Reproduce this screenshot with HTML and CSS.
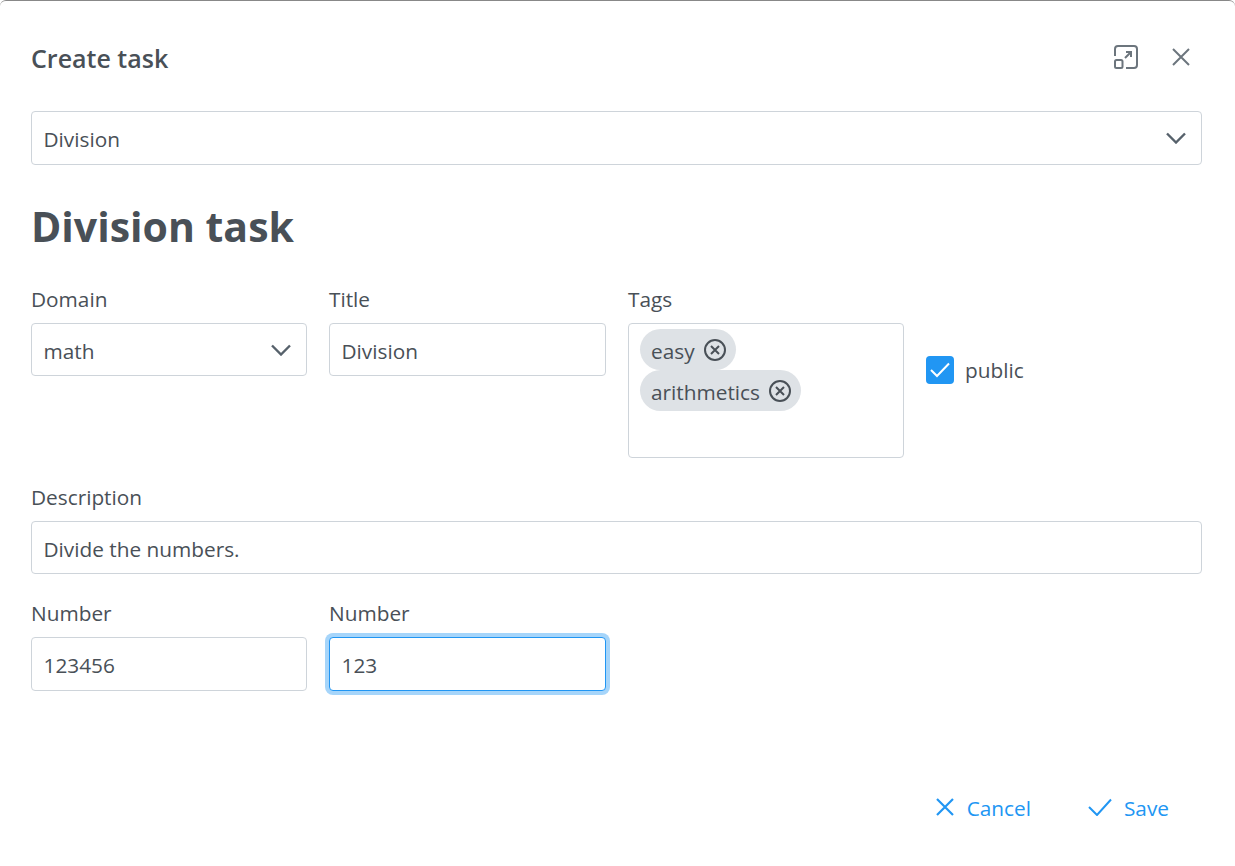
FILE: index.html
```html
<!DOCTYPE html>
<html lang="en">
<head>
  <meta charset="UTF-8" />
  <meta name="viewport" content="width=device-width, initial-scale=1.0" />
  <title>Create task</title>
  <link rel="stylesheet" href="styles.css">
</head>
<body>
  <div class="modal">
    <div class="modal-header">
      <h2 class="modal-title">Create task</h2>
      <button class="icon-btn" type="button" aria-label="Expand">
        <svg width="24" height="24" viewBox="0 0 24 24" fill="none" stroke="#6c757d" stroke-width="2">
          <path d="M1 11V4a3 3 0 0 1 3-3h16a3 3 0 0 1 3 3v16a3 3 0 0 1-3 3h-8" />
          <rect x="1" y="15" width="7.5" height="8" rx="1.5" />
          <path d="M11 13l6-6M12 7h5v5" />
        </svg>
      </button>
      <button class="icon-btn" type="button" aria-label="Close">
        <svg width="20" height="20" viewBox="0 0 20 20" fill="none" stroke="#6c757d" stroke-width="2">
          <path d="M2 2l16 16M18 2L2 18" />
        </svg>
      </button>
    </div>

    <div class="select field-full">
      <span>Division</span>
      <svg class="chevron" width="20" height="12" viewBox="0 0 20 12" fill="none" stroke="#56616b" stroke-width="2.4">
        <path d="M1 1.5l9 9 9-9" />
      </svg>
    </div>

    <h1 class="task-title">Division task</h1>

    <div class="form-row">
      <div class="field">
        <label>Domain</label>
        <div class="select short">
          <span>math</span>
          <svg class="chevron" width="20" height="12" viewBox="0 0 20 12" fill="none" stroke="#56616b" stroke-width="2.4">
            <path d="M1 1.5l9 9 9-9" />
          </svg>
        </div>
      </div>
      <div class="field">
        <label for="title">Title</label>
        <input id="title" class="short" type="text" value="Division" />
      </div>
      <div class="field">
        <label>Tags</label>
        <div class="tags">
          <span class="tag"><span class="tag-label">easy</span>
            <svg width="22" height="22" viewBox="0 0 22 22" fill="none" stroke="#495057" stroke-width="2">
              <circle cx="11" cy="11" r="10" />
              <path d="M7 7l8 8M15 7l-8 8" />
            </svg>
          </span>
          <span class="tag"><span class="tag-label">arithmetics</span>
            <svg width="22" height="22" viewBox="0 0 22 22" fill="none" stroke="#495057" stroke-width="2">
              <circle cx="11" cy="11" r="10" />
              <path d="M7 7l8 8M15 7l-8 8" />
            </svg>
          </span>
        </div>
      </div>
      <div class="check-field">
        <span class="checkbox">
          <svg width="20" height="16" viewBox="0 0 20 16" fill="none" stroke="#fff" stroke-width="2">
            <path d="M1 8l6 6L19 1.5" />
          </svg>
        </span>
        <span>public</span>
      </div>
    </div>

    <div class="field description">
      <label for="description">Description</label>
      <input id="description" class="short" type="text" value="Divide the numbers." />
    </div>

    <div class="form-row numbers">
      <div class="field">
        <label for="num1">Number</label>
        <input id="num1" type="text" value="123456" />
      </div>
      <div class="field">
        <label for="num2">Number</label>
        <input id="num2" class="focused" type="text" value="123" />
      </div>
    </div>

    <div class="modal-footer">
      <button class="text-btn" type="button">
        <svg width="20" height="20" viewBox="0 0 20 20" fill="none" stroke="#2196f3" stroke-width="2.2">
          <path d="M2 2l16 16M18 2L2 18" />
        </svg>
        Cancel
      </button>
      <button class="text-btn" type="button">
        <svg width="24" height="18" viewBox="0 0 24 18" fill="none" stroke="#2196f3" stroke-width="2">
          <path d="M1 9l8 8L23 1.5" />
        </svg>
        Save
      </button>
    </div>
  </div>
</body>
</html>
```

FILE: styles.css
```css
* {
  box-sizing: border-box;
}

body {
  margin: 0;
  background-color: #fff;
  color: #495057;
  font-family: "Open Sans", "Noto Sans", sans-serif;
  font-size: 20.8px;
  overflow: hidden;
}

.modal {
  height: 866px;
  padding: 0 33px 0 31px;
  border-top: 1px solid #888;
  border-radius: 6px 6px 0 0;
  background: #fff;
}

.modal-header {
  display: flex;
  align-items: center;
  height: 110px;
  padding-top: 4px;
}

.modal-title {
  flex: 1;
  margin: 0;
  font-size: 25px;
  font-weight: 600;
}

.icon-btn {
  display: flex;
  padding: 0;
  border: none;
  background: none;
  margin-bottom: 3px;
}

.icon-btn + .icon-btn {
  margin-left: 33px;
  margin-right: 11px;
}

.select,
input {
  display: flex;
  align-items: center;
  width: 100%;
  height: 54px;
  padding: 2px 11.5px 0;
  border: 1px solid #ced4da;
  border-radius: 4px;
  background: #fff;
  color: #495057;
  font: inherit;
}

.short {
  height: 53px;
}

.select span {
  flex: 1;
}

.chevron {
  margin-top: -2px;
  margin-right: 4px;
}

.task-title {
  margin: 32px 0 34px;
  font-size: 41px;
  line-height: 58px;
  font-weight: 700;
}

.form-row {
  display: grid;
  grid-template-columns: 276px 277px 276px auto;
  column-gap: 22px;
}

.field label {
  display: block;
  height: 34px;
  line-height: 20px;
}

.tags {
  height: 135px;
  padding: 5px 11px;
  border: 1px solid #ced4da;
  border-radius: 4px;
}

.tag {
  display: flex;
  align-items: center;
  gap: 9px;
  width: fit-content;
  height: 41px;
  padding: 0 10px 0 11px;
  border-radius: 21px;
  background: #dee2e6;
}

.tag-label {
  padding-top: 3px;
}

.check-field {
  display: flex;
  align-items: center;
  gap: 11px;
  height: 28px;
  margin-top: 67px;
}

.checkbox {
  display: flex;
  align-items: center;
  justify-content: center;
  width: 28px;
  height: 28px;
  border-radius: 4px;
  background: #2196f3;
}

.description {
  margin-top: 29px;
}

.numbers {
  margin-top: 29px;
}

.focused {
  border-color: #2196f3;
  box-shadow: 0 0 0 4px #a6d5fa;
  outline: none;
}

.modal-footer {
  display: flex;
  justify-content: flex-end;
  gap: 57px;
  margin-top: 103px;
  padding-right: 33px;
}

.text-btn {
  display: flex;
  align-items: center;
  gap: 12px;
  padding: 0;
  border: none;
  background: none;
  color: #2196f3;
  font: inherit;
}

.text-btn svg {
  margin-bottom: 3px;
}
```
